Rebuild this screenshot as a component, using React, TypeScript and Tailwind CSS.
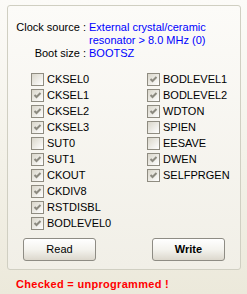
import { FC } from "react";

const leftFuses: [string, boolean][] = [
  ["CKSEL0", false],
  ["CKSEL1", true],
  ["CKSEL2", true],
  ["CKSEL3", true],
  ["SUT0", false],
  ["SUT1", true],
  ["CKOUT", true],
  ["CKDIV8", true],
  ["RSTDISBL", true],
  ["BODLEVEL0", true],
];

const rightFuses: [string, boolean][] = [
  ["BODLEVEL1", true],
  ["BODLEVEL2", true],
  ["WDTON", true],
  ["SPIEN", false],
  ["EESAVE", false],
  ["DWEN", true],
  ["SELFPRGEN", true],
];

const FuseBox: FC<{ label: string; checked: boolean }> = ({ label, checked }) => (
  <div className="flex h-[16px] items-center">
    <span className="flex h-[13px] w-[13px] shrink-0 items-center justify-center border border-[#8f8c81] bg-gradient-to-br from-[#d9d6ca] to-white">
      {checked && (
        <svg width="11" height="11" viewBox="0 0 11 11">
          <polyline
            points="2.5,5 4.5,7 8.5,3"
            fill="none"
            stroke="#8c8a80"
            strokeWidth="2"
          />
        </svg>
      )}
    </span>
    <span className="ml-[3px]">{label}</span>
  </div>
);

const XpButton: FC<{ text: string; bold?: boolean }> = ({ text, bold }) => (
  <button
    className={
      bold
        ? "h-[23px] w-[73px] rounded-[3px] border border-[#8e8c84] bg-gradient-to-b from-white via-[#f4f3ee] to-[#dcd8cd] text-[11px] font-bold text-black"
        : "h-[23px] w-[73px] rounded-[3px] border border-[#8e8c84] bg-gradient-to-b from-white via-[#f4f3ee] to-[#dcd8cd] text-[11px] text-black"
    }
  >
    {text}
  </button>
);

const App: FC = () => {
  return (
    <div className="h-[294px] w-[247px] overflow-hidden bg-gradient-to-b from-[#fcfbf8] to-[#ece9db] font-['Liberation_Sans',Arial,sans-serif] text-[11px] leading-[13px] text-black">
      <div className="ml-[7px] mt-[5px] h-[265px] w-[234px] rounded-[3px] border border-[#d0cfc2] bg-gradient-to-b from-[#fcfbf8] to-[#f1efe7]">
        {/* Fuse summary */}
        <div className="grid grid-cols-[78px_1fr] gap-x-[3px] pt-[15px]">
          <span className="text-right">Clock source :</span>
          <span className="text-[#0000ff]">
            External crystal/ceramic
            <br />
            resonator &gt; 8.0 MHz (0)
          </span>
          <span className="text-right">Boot size :</span>
          <span className="text-[#0000ff]">BOOTSZ</span>
        </div>

        {/* Fuse bits */}
        <div className="mt-[11px] flex pl-[23px]">
          <div className="flex w-[116px] flex-col">
            {leftFuses.map(([name, on]) => (
              <FuseBox key={name} label={name} checked={on} />
            ))}
          </div>
          <div className="flex flex-col">
            {rightFuses.map(([name, on]) => (
              <FuseBox key={name} label={name} checked={on} />
            ))}
          </div>
        </div>

        <div className="mt-[7px] flex gap-[56px] pl-[15px]">
          <XpButton text="Read" />
          <XpButton text="Write" bold />
        </div>
      </div>

      <p className="mt-[8px] pl-[16px] font-bold tracking-[0.3px] text-[#ff0000]">
        Checked = unprogrammed !
      </p>
    </div>
  );
};

export default App;
